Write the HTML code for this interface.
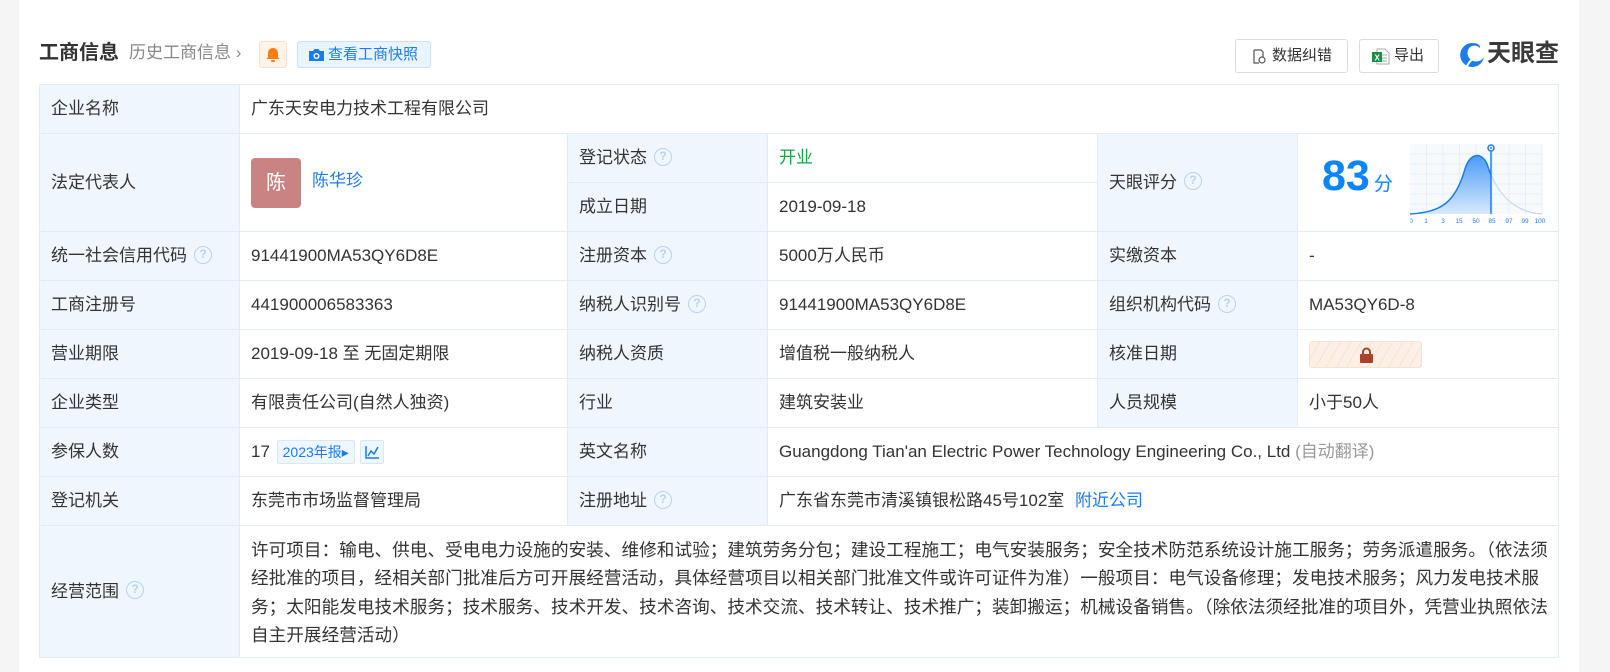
<!DOCTYPE html>
<html><head><meta charset="utf-8"><style>
*{margin:0;padding:0;box-sizing:border-box}
body{width:1610px;height:672px;background:#f5f5f5;font-family:"Liberation Sans","Noto Sans CJK SC",sans-serif;color:#333;position:relative;overflow:hidden}
.card{position:absolute;left:19px;top:0;width:1560px;height:672px;background:#fff}
.abs{position:absolute}
table{position:absolute;left:39px;top:84px;width:1519px;border-collapse:collapse;table-layout:fixed;font-size:17px}
td{border:1px solid #e3ecf6;padding:0 11px;height:49px;vertical-align:middle;line-height:24px;white-space:nowrap}
td.l{background:#eff6fd}
.q{display:inline-block;width:18px;height:18px;border:1.5px solid #b7d3f0;border-radius:50%;color:#b7d3f0;font-size:12px;line-height:15px;text-align:center;vertical-align:middle;position:relative;top:-2px;margin-left:7px;font-weight:bold;font-family:"Liberation Sans",sans-serif}
.blue{color:#1b7cf0}
.btn{position:absolute;top:39px;height:34px;border:1px solid #dcdcdc;border-radius:3px;background:#fff;font-size:15px;line-height:32px;color:#333}
</style></head><body>
<div class="card"></div>
<div class="abs" style="left:39px;top:40px;font-size:20px;font-weight:bold;color:#333;line-height:26px">工商信息</div>
<div class="abs" style="left:129px;top:41px;font-size:17px;color:#888;line-height:24px">历史工商信息 ›</div>
<div class="abs" style="left:259px;top:41px;width:28px;height:27px;background:#fff4ea;border:1px solid #fbe0c8;border-radius:3px">
<svg width="26" height="25" viewBox="0 0 26 25"><path d="M13 6c-3 0-5 2.3-5 5v4l-1.5 2h13L18 15v-4c0-2.7-2-5-5-5z" fill="#ff7d12"/><rect x="11" y="18" width="4" height="2" rx="1" fill="#ff7d12"/></svg></div>
<div class="abs" style="left:297px;top:41px;width:134px;height:27px;background:#eaf4ff;border:1px solid #c8e0fb;border-radius:3px;font-size:15px;line-height:25px;color:#1b7cf0;padding-left:30px">查看工商快照
<svg class="abs" style="left:10px;top:6px" width="17" height="14" viewBox="0 0 17 14"><path d="M1 3h4l1.5-2h4L12 3h4v10H1z" fill="#1b7cf0"/><circle cx="8.5" cy="8" r="3" fill="#fff"/><circle cx="8.5" cy="8" r="1.6" fill="#1b7cf0"/></svg></div>

<div class="btn" style="left:1235px;width:113px;padding-left:36px">数据纠错
<svg class="abs" style="left:16px;top:9px" width="14" height="15" viewBox="0 0 14 15"><path d="M2 1h7l2 2v5M2 1v13h5" fill="none" stroke="#555" stroke-width="1.2"/><circle cx="10" cy="11" r="3" fill="none" stroke="#555" stroke-width="1.2"/></svg></div>
<div class="btn" style="left:1359px;width:80px;padding-left:34px">导出
<svg class="abs" style="left:12px;top:8px" width="18" height="17" viewBox="0 0 18 17"><path d="M5 1h8l4 4v11H5z" fill="#fff" stroke="#aaa"/><path d="M10 7h5M10 10h5M10 13h5" stroke="#aaa"/><rect x="0" y="4" width="10" height="10" fill="#1e8c45"/><text x="2.5" y="12.5" font-size="8" fill="#fff" font-family="Liberation Sans" font-weight="bold">X</text></svg></div>
<div class="abs" style="left:1459px;top:42px">
<svg width="26" height="26" viewBox="0 0 26 26"><path d="M13 1a12 12 0 1 0 12 14c-3 5-10 6-14 2s-3-11 2-13c3-1 6 0 8 2 1-3-3-5-8-5z" fill="#1b7cf0"/><path d="M8 24c3-6 8-10 16-10" fill="none" stroke="#fff" stroke-width="2"/></svg>
<span style="position:absolute;left:28px;top:-2px;font-size:24px;font-weight:bold;color:#3a3a3a;white-space:nowrap;line-height:28px">天眼查</span></div>

<table>
<colgroup><col style="width:200px"><col style="width:328px"><col style="width:200px"><col style="width:330px"><col style="width:200px"><col style="width:261px"></colgroup>
<tr><td class="l">企业名称</td><td colspan="5">广东天安电力技术工程有限公司</td></tr>
<tr><td class="l" rowspan="2">法定代表人</td><td rowspan="2" style="position:relative"><div style="position:absolute;left:11px;top:24px;width:50px;height:50px;background:#c98382;border-radius:4px;color:#fff;font-size:20px;line-height:50px;text-align:center">陈</div><span class="blue" style="position:absolute;left:72px;top:35px">陈华珍</span></td>
<td class="l">登记状态<span class="q">?</span></td><td style="color:#16a34a">开业</td>
<td class="l" rowspan="2">天眼评分<span class="q">?</span></td>
<td rowspan="2" style="position:relative">
<div style="position:absolute;left:24px;top:17px;color:#0a84ff;white-space:nowrap"><span style="font-size:43px;font-weight:bold;line-height:50px">83</span><span style="font-size:19px;margin-left:4px">分</span></div>
<svg style="position:absolute;left:112px;top:10px" width="136" height="82" viewBox="0 0 136 82">
<defs><linearGradient id="g" x1="0" y1="0" x2="0" y2="1"><stop offset="0" stop-color="#4a9cf5"/><stop offset="1" stop-color="#d8eafd"/></linearGradient><clipPath id="cl"><rect x="0" y="0" width="81" height="80"/></clipPath><clipPath id="cr"><rect x="81" y="0" width="60" height="80"/></clipPath></defs>
<rect x="0" y="0" width="132" height="70" fill="#f7fafd"/>
<g stroke="#e6eef8" stroke-width="1"><path d="M16.5 0V70M33 0V70M49.5 0V70M66 0V70M82.5 0V70M99 0V70M115.5 0V70M132 0V70M0 10H132M0 20H132M0 30H132M0 40H132M0 50H132M0 60H132"/></g>
<path d="M0 70C30 68 45 60 55 25C60 8 72 8 77 20C85 45 100 68 132 70L132 70Z" fill="url(#g)" clip-path="url(#cl)"/>
<path d="M0 70C30 68 45 60 55 25C60 8 72 8 77 20C85 45 100 68 132 70" fill="none" stroke="#1b7cf0" stroke-width="1.5" clip-path="url(#cl)"/>
<path d="M0 70C30 68 45 60 55 25C60 8 72 8 77 20C85 45 100 68 132 70" fill="none" stroke="#c8d6e6" stroke-width="1.2" clip-path="url(#cr)"/>
<path d="M81 6V70" stroke="#1b7cf0" stroke-width="1.5"/><circle cx="81" cy="4" r="3" fill="#fff" stroke="#1b7cf0" stroke-width="1.5"/><circle cx="81" cy="4" r="1" fill="#1b7cf0"/>
<g font-size="6.5" fill="#1b7cf0" font-family="Liberation Sans" text-anchor="middle"><text x="1" y="79">0</text><text x="16" y="79">1</text><text x="33" y="79">3</text><text x="49" y="79">15</text><text x="66" y="79">50</text><text x="82" y="79">85</text><text x="99" y="79">97</text><text x="115" y="79">99</text><text x="130" y="79">100</text></g>
</svg></td></tr>
<tr><td class="l">成立日期</td><td>2019-09-18</td></tr>
<tr><td class="l">统一社会信用代码<span class="q">?</span></td><td>91441900MA53QY6D8E</td><td class="l">注册资本<span class="q">?</span></td><td>5000万人民币</td><td class="l">实缴资本</td><td>-</td></tr>
<tr><td class="l">工商注册号</td><td>441900006583363</td><td class="l">纳税人识别号<span class="q">?</span></td><td>91441900MA53QY6D8E</td><td class="l">组织机构代码<span class="q">?</span></td><td>MA53QY6D-8</td></tr>
<tr><td class="l">营业期限</td><td>2019-09-18 至 无固定期限</td><td class="l">纳税人资质</td><td>增值税一般纳税人</td><td class="l">核准日期</td><td><div style="width:113px;height:27px;border-radius:3px;border:1px solid #f6e2d2;background:repeating-linear-gradient(120deg,#fbefe6 0 8px,#f6e3d6 8px 9px);position:relative"><svg style="position:absolute;left:49px;top:5px" width="15" height="16" viewBox="0 0 15 16"><path d="M4 7V5a3.5 3.5 0 0 1 7 0v2" fill="none" stroke="#a8442a" stroke-width="2"/><rect x="1" y="7" width="13" height="9" rx="1" fill="#a8442a"/></svg></div></td></tr>
<tr><td class="l">企业类型</td><td>有限责任公司(自然人独资)</td><td class="l">行业</td><td>建筑安装业</td><td class="l">人员规模</td><td>小于50人</td></tr>
<tr><td class="l">参保人数</td><td>17 <span style="display:inline-block;height:24px;border:1px solid #d8e8fb;background:#eef6ff;border-radius:2px;color:#1b7cf0;font-size:14px;line-height:22px;padding:0 5px;margin-left:2px">2023年报▸</span> <span style="display:inline-block;width:24px;height:24px;border:1px solid #d8e8fb;background:#eef6ff;border-radius:2px;vertical-align:top;margin-top:0px"><svg width="22" height="22" viewBox="0 0 22 22"><path d="M5 5v12h13" fill="none" stroke="#1b7cf0" stroke-width="1.5"/><path d="M7 15l3-5 3 3 4-7" fill="none" stroke="#1b7cf0" stroke-width="1.5"/></svg></span></td><td class="l">英文名称</td><td colspan="3">Guangdong Tian'an Electric Power Technology Engineering Co., Ltd <span style="color:#999">(自动翻译)</span></td></tr>
<tr><td class="l">登记机关</td><td>东莞市市场监督管理局</td><td class="l">注册地址<span class="q">?</span></td><td colspan="3">广东省东莞市清溪镇银松路45号102室 <span class="blue" style="margin-left:6px">附近公司</span></td></tr>
<tr><td class="l" style="height:132px">经营范围<span class="q">?</span></td><td colspan="5" style="line-height:28.5px;font-size:17.6px;letter-spacing:0.05px;padding-top:2px">许可项目：输电、供电、受电电力设施的安装、维修和试验；建筑劳务分包；建设工程施工；电气安装服务；安全技术防范系统设计施工服务；劳务派遣服务。（依法须<br>经批准的项目，经相关部门批准后方可开展经营活动，具体经营项目以相关部门批准文件或许可证件为准）一般项目：电气设备修理；发电技术服务；风力发电技术服<br>务；太阳能发电技术服务；技术服务、技术开发、技术咨询、技术交流、技术转让、技术推广；装卸搬运；机械设备销售。（除依法须经批准的项目外，凭营业执照依法<br>自主开展经营活动）</td></tr>
</table>
</body></html>
